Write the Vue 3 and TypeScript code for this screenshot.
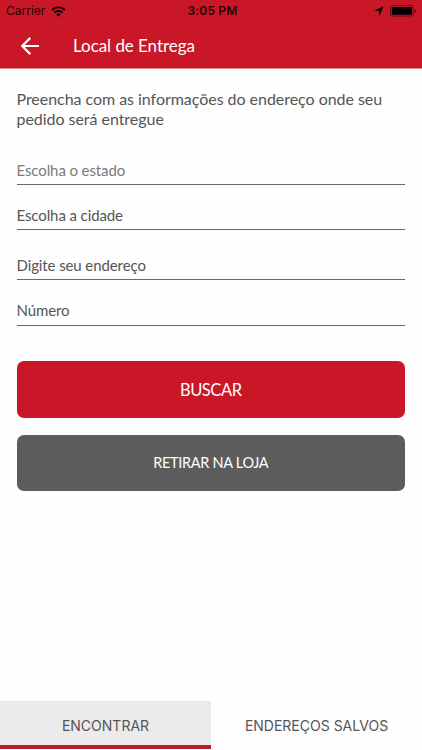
<script setup lang="ts">
import { ref } from 'vue'

interface Field {
  id: string
  label: string
}

type Tab = 'find' | 'saved'

const fields: Field[] = [
  { id: 'state', label: 'Escolha o estado' },
  { id: 'city', label: 'Escolha a cidade' },
  { id: 'address', label: 'Digite seu endereço' },
  { id: 'number', label: 'Número' },
]

const activeTab = ref<Tab>('find')
</script>

<template>
  <div class="screen">
    <header class="header">
      <div class="status">
        <div class="status-left">
          <span class="carrier">Carrier</span>
          <svg class="wifi" width="15" height="11" viewBox="0 0 15 11">
            <path d="M7.5 10.7 5.3 8.4a3.2 3.2 0 0 1 4.4 0Z" fill="#000" />
            <path d="M3.4 6.6a6 6 0 0 1 8.2 0M1 4a9.4 9.4 0 0 1 13 0" fill="none" stroke="#000" stroke-width="1.9" />
          </svg>
        </div>
        <span class="time">3:05 PM</span>
        <div class="status-right">
          <svg width="10" height="10" viewBox="0 0 10 10">
            <path d="M9.7.2 5.3 9.8 4.9 5.1.2 4.7Z" fill="#000" />
          </svg>
          <svg width="27" height="12" viewBox="0 0 27 12">
            <rect x=".5" y=".7" width="22.8" height="10.3" rx="2" fill="none" stroke="#4c0a10" stroke-width=".8" />
            <rect x="1.8" y="2" width="20.2" height="7.7" rx=".8" fill="#000" />
            <path d="M24.5 4.1q1.5.5 1.5 1.8t-1.5 1.8Z" fill="#4c0a10" />
          </svg>
        </div>
      </div>
      <div class="titlebar">
        <svg class="back" width="20" height="20" viewBox="0 0 20 20">
          <path d="M19 10H2.3M10.3 1.9 2.2 10l8.1 8.1" fill="none" stroke="#fff" stroke-width="2.2" />
        </svg>
        <h1 class="title">Local de Entrega</h1>
      </div>
    </header>

    <main class="content">
      <p class="intro">
        <span class="line">Preencha com as informações do endereço onde seu</span>
        <span class="line">pedido será entregue</span>
      </p>
      <div class="form">
        <div v-for="f in fields" :key="f.id" class="field" :class="f.id">
          <span class="label">{{ f.label }}</span>
        </div>
      </div>
      <button class="btn primary" type="button"><span>BUSCAR</span></button>
      <button class="btn secondary" type="button"><span>RETIRAR NA LOJA</span></button>
    </main>

    <nav class="tabs">
      <button class="tab find" :class="{ active: activeTab === 'find' }" type="button" @click="activeTab = 'find'">ENCONTRAR</button>
      <button class="tab saved" :class="{ active: activeTab === 'saved' }" type="button" @click="activeTab = 'saved'">ENDEREÇOS SALVOS</button>
    </nav>
  </div>
</template>

<style>
body {
  background: #fff;
}
</style>

<style scoped>
.screen {
  width: 422px;
  height: 750px;
  display: flex;
  flex-direction: column;
  overflow: hidden;
  background: #fefefe;
  font-family: Lato, 'Open Sans', sans-serif;
  color: #555;
}
.header {
  height: 68px;
  flex: none;
  background: #c91728;
  border-bottom: 1px solid #e28b92;
}
.status {
  height: 22px;
  display: grid;
  grid-template-columns: 1fr auto 1fr;
  align-items: center;
  padding: 0 5px 0 6px;
  font: 400 12px/22px Inter, sans-serif;
  color: #210307;
}
.status-left,
.status-right {
  display: flex;
  align-items: center;
}
.status-left {
  gap: 6px;
}
.status-right {
  justify-content: flex-end;
  gap: 6px;
}
.time {
  padding-left: 2px;
  font-weight: 600;
  letter-spacing: 0.2px;
}
.titlebar {
  height: 47px;
  display: flex;
  align-items: center;
  padding-left: 20px;
  gap: 33px;
}
.title {
  margin: 0;
  font-size: 17px;
  font-weight: 400;
  line-height: 20px;
  letter-spacing: -0.05px;
  color: #fff;
}
.content {
  flex: 1;
  padding: 20px 17px 0 16.5px;
}
.intro {
  margin: 0;
  font-size: 16px;
  line-height: 20px;
  letter-spacing: -0.04px;
}
.line {
  display: block;
  white-space: nowrap;
}
.form {
  display: flex;
  flex-direction: column;
  margin-top: 19px;
}
.field {
  height: 45px;
  display: flex;
  align-items: flex-end;
  padding-bottom: 4px;
  box-sizing: border-box;
  border-bottom: 1px solid #6a6a6a;
  font-size: 15px;
  line-height: 20px;
  letter-spacing: -0.1px;
}
.state {
  height: 37px;
  color: #7b7b7b;
}
.address {
  height: 50px;
}
.number {
  height: 46px;
  padding-bottom: 5px;
}
.btn {
  width: 100%;
  height: 57px;
  display: flex;
  align-items: center;
  justify-content: center;
  padding: 0;
  border: 0;
  border-radius: 7px;
  font-family: inherit;
  color: #fff;
}
.primary {
  margin-top: 35px;
  background: #c91728;
  font-size: 16.5px;
  letter-spacing: -0.45px;
}
.secondary {
  height: 56.5px;
  margin-top: 16.5px;
  background: #5c5c5c;
  font-size: 14.5px;
  letter-spacing: -0.3px;
}
.tabs {
  height: 48px;
  flex: none;
  display: grid;
  grid-template-columns: 1fr 1fr;
  margin-bottom: 1px;
}
.tab {
  padding: 5px 0 0;
  border: 0;
  border-bottom: 4px solid transparent;
  background: transparent;
  font: 400 14px/20px Inter, sans-serif;
  color: #555;
}
.tab.active {
  background: #ebebeb;
  border-bottom-color: #bd1928;
}
</style>
